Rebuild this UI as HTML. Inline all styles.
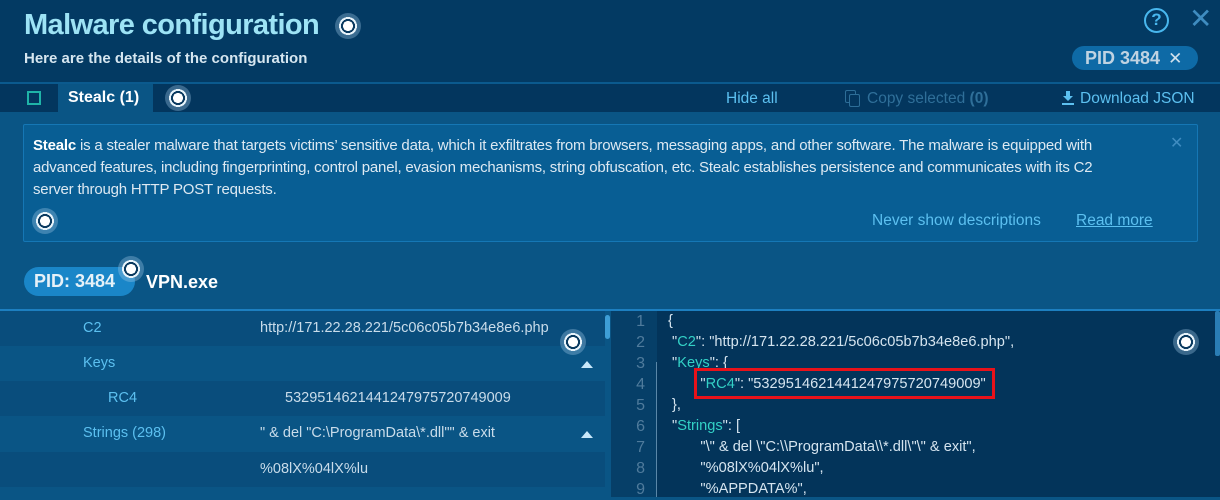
<!DOCTYPE html>
<html><head><meta charset="utf-8"><style>
*{margin:0;padding:0;box-sizing:border-box}
body{width:1220px;height:497px;overflow:hidden;background:#0a5585;font-family:"Liberation Sans",sans-serif;position:relative}
.a{position:absolute}
.dot{position:absolute;width:26px;height:26px;border-radius:50%;background:radial-gradient(circle,#fff 0 5px,#0a3a60 5px 7px,#e8f4fb 7px 9px,rgba(160,200,230,.35) 9px 13px)}
.row{position:absolute;left:0;width:605px;height:35px;font-size:14.5px;line-height:35px}
.lb{position:absolute;color:#5cc0f0}
.vl{position:absolute;left:260px;color:#c9dcea}
.tri{position:absolute;left:581px;top:15px;width:0;height:0;border-left:6px solid transparent;border-right:6px solid transparent;border-bottom:7px solid #c8e8fa}
.ln{position:absolute;left:611px;width:34px;text-align:right;color:#4f7b9c;font-size:16px}
.cd{position:absolute;font-size:14.6px;color:#d5e4ef;white-space:pre}
.k{color:#33d1c6}
</style></head><body>
<div class="a" style="left:0;top:0;width:1220px;height:82px;background:#033a63"></div>
<div class="a" style="left:24px;top:9px;font-size:29px;font-weight:bold;color:#9de3f5;letter-spacing:-0.6px">Malware configuration</div>
<div class="dot" style="left:335px;top:13px"></div>
<div class="a" style="left:24px;top:50px;font-size:15px;font-weight:bold;color:#d6e6f0">Here are the details of the configuration</div>
<div class="a" style="left:1144px;top:8px;width:25px;height:25px;border:2.5px solid #48b7ee;border-radius:50%;color:#48b7ee;font-size:17px;font-weight:bold;text-align:center;line-height:20px">?</div>
<div class="a" style="left:1189px;top:4px;font-size:28px;color:#3f8cc0;line-height:30px">✕</div>
<div class="a" style="left:1072px;top:46px;width:126px;height:24px;border-radius:12px;background:#0e6aa6;color:#bfd3e2;font-size:18px;font-weight:bold;line-height:24px;padding-left:13px">PID 3484 <span style="font-weight:normal;color:#cfe0ec;font-size:17px;margin-left:3px">✕</span></div>
<div class="a" style="left:0;top:82px;width:1220px;height:2px;background:#0b5a8e"></div>
<div class="a" style="left:0;top:84px;width:1220px;height:28px;background:#03365e"></div>
<div class="a" style="left:27px;top:91px;width:14px;height:14px;border:2px solid #1fb4a8"></div>
<div class="a" style="left:58px;top:84px;width:95px;height:28px;background:#0a5585;color:#fff;font-size:16px;font-weight:bold;line-height:28px;padding-left:10px">Stealc (1)</div>
<div class="dot" style="left:165px;top:85px"></div>
<div class="a" style="left:726px;top:90px;font-size:15.5px;color:#5cc0f0">Hide all</div>
<div class="a" style="left:845px;top:90px;width:11px;height:13px;border:1.5px solid #2d6e98;border-radius:2px"></div>
<div class="a" style="left:849px;top:94px;width:11px;height:13px;border:1.5px solid #2d6e98;border-radius:2px;background:#03365e"></div>
<div class="a" style="left:867px;top:90px;font-size:15.5px;color:#2f6f99">Copy selected <b>(0)</b></div>
<div class="a" style="left:1062px;top:91px;width:12px;height:14px"><svg width="12" height="14"><path d="M4 0h4v5h3L6 10 1 5h3z" fill="#5cc0f0"/><rect x="0" y="12" width="12" height="2" fill="#5cc0f0"/></svg></div>
<div class="a" style="left:1080px;top:90px;font-size:15.5px;color:#5cc0f0">Download JSON</div>
<div class="a" style="left:23px;top:124px;width:1175px;height:118px;background:#085e94;border:1px solid #1577b5;border-radius:2px"></div>
<div class="a" style="left:33px;top:135px;white-space:nowrap;font-size:15px;letter-spacing:-0.2px;line-height:22px;color:#dde9f2"><b style="color:#fff">Stealc</b> is a stealer malware that targets victims’ sensitive data, which it exfiltrates from browsers, messaging apps, and other software. The malware is equipped with<br>advanced features, including fingerprinting, control panel, evasion mechanisms, string obfuscation, etc. Stealc establishes persistence and communicates with its C2<br>server through HTTP POST requests.</div>
<div class="a" style="left:1170px;top:133px;font-size:16px;color:#3f8cc0">✕</div>
<div class="dot" style="left:32px;top:208px"></div>
<div class="a" style="left:872px;top:212px;font-size:15.5px;color:#5cc0f0">Never show descriptions</div>
<div class="a" style="left:1076px;top:212px;font-size:15.5px;color:#5cc0f0;text-decoration:underline">Read more</div>
<div class="a" style="left:24px;top:267px;width:111px;height:29px;border-radius:15px;background:#1a86c8;color:#e6f1f8;font-size:18px;font-weight:bold;line-height:29px;padding-left:10px">PID: 3484</div>
<div class="dot" style="left:118px;top:256px"></div>
<div class="a" style="left:146px;top:272px;font-size:18px;font-weight:bold;color:#fff">VPN.exe</div>
<div class="a" style="left:0;top:309px;width:1220px;height:2px;background:#1d7fc0"></div>
<div class="row" style="top:311px;background:#094d7c"><span class="lb" style="left:83px">C2</span><span class="vl">http://171.22.28.221/5c06c05b7b34e8e6.php</span></div>
<div class="row" style="top:346px"><span class="lb" style="left:83px">Keys</span><span class="tri"></span></div>
<div class="row" style="top:381px;background:#094d7c"><span class="lb" style="left:108px">RC4</span><span class="vl" style="left:285px">5329514621441247975720749009</span></div>
<div class="row" style="top:416px"><span class="lb" style="left:83px">Strings (298)</span><span class="vl">" &amp; del "C:\ProgramData\*.dll"" &amp; exit</span><span class="tri"></span></div>
<div class="row" style="top:452px;background:#094d7c"><span class="vl">%08lX%04lX%lu</span></div>
<div class="dot" style="left:560px;top:329px"></div>
<div class="a" style="left:605px;top:315px;width:5px;height:24px;border-radius:3px;background:#3e9ed6"></div>
<div class="a" style="left:611px;top:311px;width:46px;height:186px;background:#063f68"></div>
<div class="a" style="left:657px;top:311px;width:563px;height:186px;background:#03345a"></div>
<div class="a" style="left:1215px;top:311px;width:5px;height:45px;background:#2a7db5;border-radius:2px"></div>
<div class="a" style="left:656px;top:362px;width:1px;height:135px;background:#5a87a8"></div>
<div class="ln" style="top:311px;line-height:21px">1<br>2<br>3<br>4<br>5<br>6<br>7<br>8<br>9</div>
<div class="cd" style="left:668px;top:311px;line-height:21px">{
 "<span class="k">C2</span>": "http://171.22.28.221/5c06c05b7b34e8e6.php",
 "<span class="k">Keys</span>": {
        "<span class="k">RC4</span>": "5329514621441247975720749009"
 },
 "<span class="k">Strings</span>": [
        "\" &amp; del \"C:\\ProgramData\\*.dll\"\" &amp; exit",
        "%08lX%04lX%lu",
        "%APPDATA%",</div>
<div class="a" style="left:694px;top:368px;width:301px;height:31px;border:3px solid #e8121a"></div>
<div class="dot" style="left:1173px;top:329px"></div>
</body></html>
